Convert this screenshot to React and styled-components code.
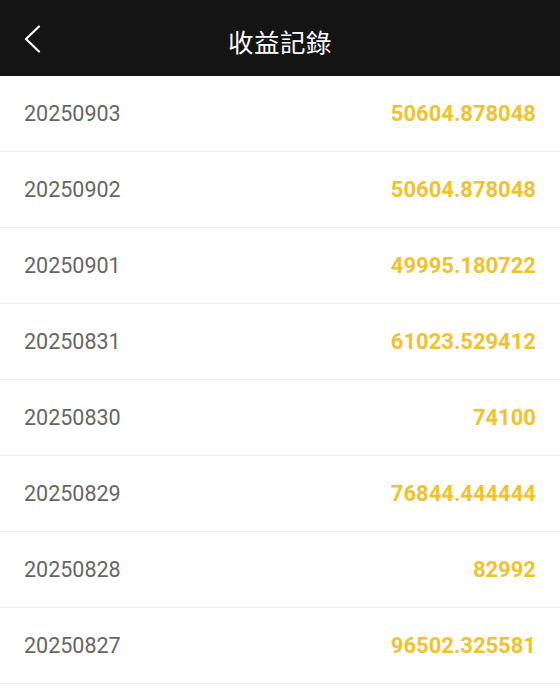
import React from 'react';
import styled, { createGlobalStyle } from 'styled-components';

const GlobalStyle = createGlobalStyle`
  html, body {
    margin: 0;
    padding: 0;
    background: #fff;
  }
  body {
    font-family: Roboto, "Noto Sans CJK TC", sans-serif;
  }
`;

const Page = styled.div`
  width: 560px;
  min-height: 698px;
  background: #fff;
`;

const Header = styled.header`
  height: 76px;
  background: #141414;
  display: grid;
  grid-template-columns: 76px 1fr 76px;
  align-items: center;
`;

const BackBtn = styled.button`
  background: none;
  border: 0;
  padding: 2px 0 0 23px;
  height: 100%;
  display: flex;
  align-items: center;
  cursor: pointer;
`;

const Title = styled.h1`
  margin: 0;
  padding-top: 4px;
  text-align: center;
  color: #fff;
  font-family: "Noto Sans CJK TC", sans-serif;
  font-size: 25.5px;
  font-weight: 400;
  letter-spacing: 0.5px;
`;

const List = styled.ul`
  list-style: none;
  margin: 0;
  padding: 0;
`;

const Row = styled.li`
  height: 75px;
  display: flex;
  align-items: center;
  justify-content: space-between;
  padding: 0 24px;
  border-bottom: 1px solid #ececec;
`;

const DateText = styled.span`
  font-size: 21.5px;
  color: #666;
`;

const Amount = styled.span`
  font-size: 22px;
  font-weight: 700;
  color: #f1c22e;
`;

const records = [
  ['20250903', '50604.878048'],
  ['20250902', '50604.878048'],
  ['20250901', '49995.180722'],
  ['20250831', '61023.529412'],
  ['20250830', '74100'],
  ['20250829', '76844.444444'],
  ['20250828', '82992'],
  ['20250827', '96502.325581'],
];

const App = () => {
  return (
    <>
      <GlobalStyle />
      <Page>
        <Header>
          <BackBtn aria-label="back">
            <svg width="18" height="28" viewBox="0 0 18 28" fill="none">
              <path d="M16 1.5 L3 14 L16 26.5" stroke="#fff" strokeWidth="2.2" strokeLinecap="round" strokeLinejoin="round" />
            </svg>
          </BackBtn>
          <Title>收益記錄</Title>
          <div />
        </Header>
        <List>
          {records.map(([date, amount]) => (
            <Row key={date}>
              <DateText>{date}</DateText>
              <Amount>{amount}</Amount>
            </Row>
          ))}
        </List>
      </Page>
    </>
  );
};

export default App;
